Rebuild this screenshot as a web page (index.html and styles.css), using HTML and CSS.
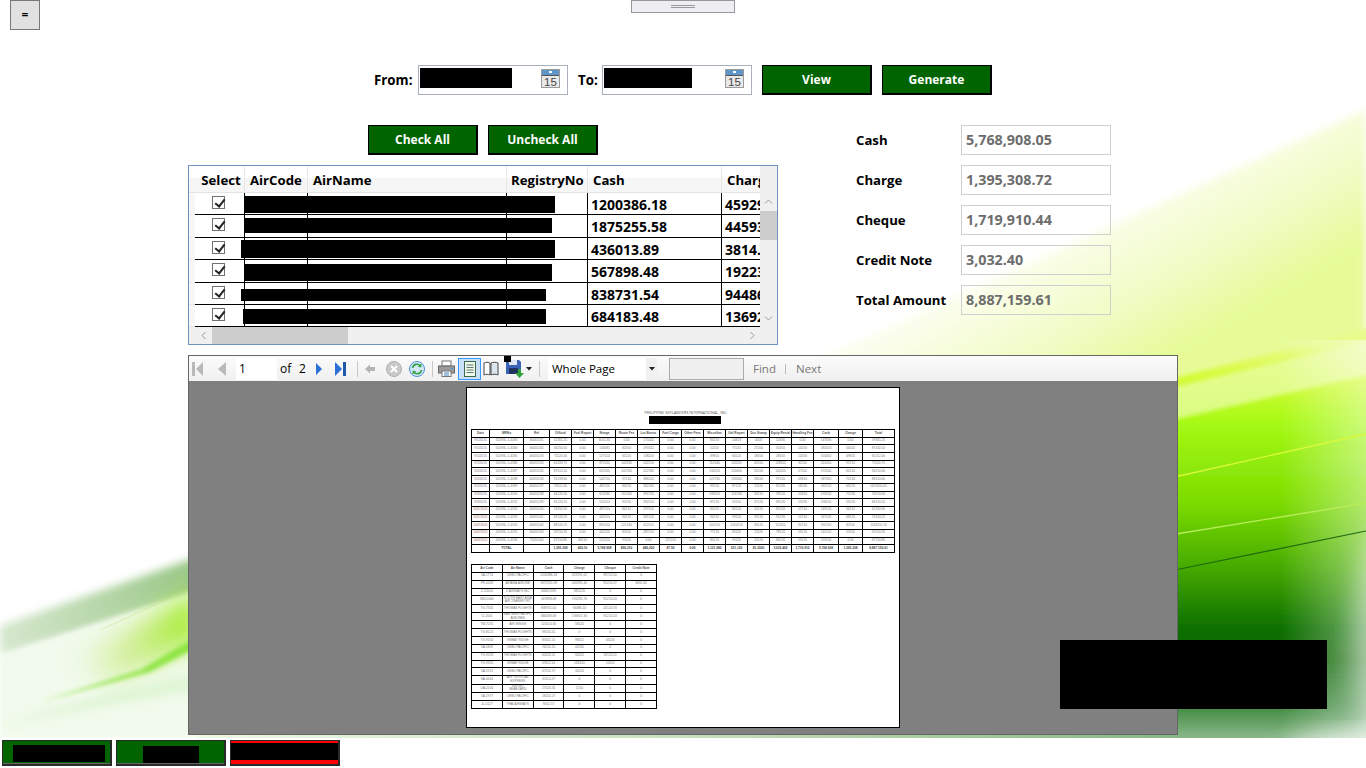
FILE: index.html
```html
<!DOCTYPE html>
<html lang="en">
<head>
<meta charset="utf-8">
<title>Collection Report</title>
<link rel="stylesheet" href="styles.css">
</head>
<body>
<header class="topbar">
  <div class="topbar-left"><button class="menu-btn">=</button></div>
  <div class="handle"><i></i></div>
  <div></div>
</header>
<main class="main">
  <svg class="backdrop" viewBox="0 30 1366 708" preserveAspectRatio="none" aria-hidden="true">
    <defs>
      <filter id="b2" x="-20%" y="-20%" width="140%" height="140%"><feGaussianBlur stdDeviation="2"/></filter>
      <filter id="b4" x="-20%" y="-20%" width="140%" height="140%"><feGaussianBlur stdDeviation="4"/></filter>
      <filter id="b12" x="-20%" y="-20%" width="140%" height="140%"><feGaussianBlur stdDeviation="12"/></filter>
      <linearGradient id="wash" gradientUnits="userSpaceOnUse" x1="1000" y1="200" x2="1110" y2="390">
        <stop offset="0" stop-color="#fff"/><stop offset=".3" stop-color="#fbfeec"/><stop offset=".7" stop-color="#f0fcc4"/><stop offset="1" stop-color="#e6fb98"/>
      </linearGradient>
      <linearGradient id="lime" gradientUnits="userSpaceOnUse" x1="0" y1="345" x2="0" y2="738">
        <stop offset="0" stop-color="#e8fb8c"/><stop offset=".08" stop-color="#d6fb38"/><stop offset=".2" stop-color="#a6f914"/>
        <stop offset=".4" stop-color="#7cdc00"/><stop offset=".56" stop-color="#48ac00"/><stop offset=".72" stop-color="#0e7000"/>
        <stop offset=".8" stop-color="#0a6400"/><stop offset=".92" stop-color="#3f8a3f"/><stop offset="1" stop-color="#8ab88a"/>
      </linearGradient>
      <linearGradient id="fade" x1="0" y1="0" x2="1" y2="0">
        <stop offset="0" stop-color="#fff" stop-opacity="0"/><stop offset="1" stop-color="#fff" stop-opacity=".42"/>
      </linearGradient>
      <linearGradient id="strip" x1="0" y1="0" x2="1" y2="0">
        <stop offset="0" stop-color="#eef8e4"/><stop offset=".5" stop-color="#c8e0bc"/><stop offset="1" stop-color="#86b686"/>
      </linearGradient>
      <linearGradient id="leftglow" gradientUnits="userSpaceOnUse" x1="70" y1="640" x2="190" y2="610">
        <stop offset="0" stop-color="#eef9e6"/><stop offset=".5" stop-color="#cfee90"/><stop offset="1" stop-color="#a4ec2c"/>
      </linearGradient>
      <linearGradient id="shade" gradientUnits="userSpaceOnUse" x1="0" y1="640" x2="190" y2="580">
        <stop offset="0" stop-color="#d6e8ce"/><stop offset="1" stop-color="#9cc88a"/>
      </linearGradient>
    </defs>
    <rect x="0" y="30" width="1366" height="708" fill="#fff"/>
    <polygon points="640,440 1366,110 1366,738 640,738" fill="url(#wash)" filter="url(#b4)"/>
    <polygon points="1120,392 1380,325 1380,750 1120,750" fill="url(#lime)" filter="url(#b2)"/>
    <polygon points="1120,400 1380,338 1380,372 1120,432" fill="#e9fda8" opacity=".75" filter="url(#b2)"/>
    <rect x="1280" y="340" width="86" height="398" fill="url(#fade)"/>
    <ellipse cx="1400" cy="640" rx="46" ry="130" fill="#fff" opacity=".4" filter="url(#b12)"/>
    <ellipse cx="1370" cy="760" rx="90" ry="28" fill="#fff" opacity=".7" filter="url(#b12)"/>
    <line x1="1170" y1="478" x2="1366" y2="434" stroke="#d9f83c" stroke-width="1.4"/>
    <line x1="1170" y1="535" x2="1366" y2="503" stroke="#b8ec58" stroke-width="1.4"/>
    <line x1="1170" y1="571" x2="1366" y2="531" stroke="#1f6a10" stroke-width="1.2"/>
    <rect x="195" y="734" width="985" height="4" fill="url(#strip)"/>

    <polygon points="0,626 200,556 200,592 0,656" fill="url(#shade)" filter="url(#b4)"/>
    <polygon points="0,656 200,590 200,738 0,738" fill="#f1faec" filter="url(#b2)"/>
    <polygon points="70,660 200,590 200,640 110,685" fill="url(#leftglow)" filter="url(#b12)"/>
    <polygon points="40,702 140,670 200,634 200,646 150,672" fill="#7fe22c" opacity=".8" filter="url(#b2)"/>
    <polygon points="0,725 120,690 200,672 200,690 110,705" fill="#dcf5d0" opacity=".8" filter="url(#b4)"/>
    <line x1="100" y1="630" x2="188" y2="590" stroke="#c4de80" stroke-width="1" opacity=".5"/>
  </svg>

  <section class="filters">
    <label class="date-label">From:</label>
    <div class="date-box">
      <span class="ink ink-from"></span>
      <svg class="cal" viewBox="0 0 19 19"><rect x=".5" y=".5" width="18" height="18" fill="#e9e9e9" stroke="#9a9a9a"/><rect x="1" y="1" width="17" height="5" fill="#5f95c8"/><rect x="1" y="6" width="17" height="1" fill="#555"/><rect x="8" y="2" width="3" height="2" fill="#fff"/><text x="9.5" y="16.500" text-anchor="middle" class="cal-text">15</text></svg>
    </div>
    <label class="date-label label-to">To:</label>
    <div class="date-box">
      <span class="ink ink-to"></span>
      <svg class="cal" viewBox="0 0 19 19"><rect x=".5" y=".5" width="18" height="18" fill="#e9e9e9" stroke="#9a9a9a"/><rect x="1" y="1" width="17" height="5" fill="#5f95c8"/><rect x="1" y="6" width="17" height="1" fill="#555"/><rect x="8" y="2" width="3" height="2" fill="#fff"/><text x="9.5" y="16.500" text-anchor="middle" class="cal-text">15</text></svg>
    </div>
    <button class="green-btn btn-view">View</button>
    <button class="green-btn">Generate</button>
  </section>

  <section class="middle">
    <div class="left-col">
      <div class="check-row">
        <button class="green-btn">Check All</button>
        <button class="green-btn">Uncheck All</button>
      </div>
      <div class="grid">
        <div class="grid-view">
          <div class="row head">
            <span class="c0"></span><span class="c1">Select</span><span class="c2">AirCode</span><span class="c3">AirName</span><span class="c4">RegistryNo</span><span class="c5">Cash</span><span class="c6">Charge</span>
          </div>
          <div class="row"><span class="c0"></span><span class="c1"><i class="tick"></i></span><span class="c2"></span><span class="c3"></span><span class="c4"></span><span class="c5">1200386.18</span><span class="c6">459291.02</span><span class="ink rr r1"></span></div>
          <div class="row"><span class="c0"></span><span class="c1"><i class="tick"></i></span><span class="c2"></span><span class="c3"></span><span class="c4"></span><span class="c5">1875255.58</span><span class="c6">445931.40</span><span class="ink rr r2"></span></div>
          <div class="row"><span class="c0"></span><span class="c1"><i class="tick"></i></span><span class="c2"></span><span class="c3"></span><span class="c4"></span><span class="c5">436013.89</span><span class="c6">3814.20</span><span class="ink rr r3"></span></div>
          <div class="row"><span class="c0"></span><span class="c1"><i class="tick"></i></span><span class="c2"></span><span class="c3"></span><span class="c4"></span><span class="c5">567898.48</span><span class="c6">192235.70</span><span class="ink rr r4"></span></div>
          <div class="row"><span class="c0"></span><span class="c1"><i class="tick"></i></span><span class="c2"></span><span class="c3"></span><span class="c4"></span><span class="c5">838731.54</span><span class="c6">94486.10</span><span class="ink rr r5"></span></div>
          <div class="row"><span class="c0"></span><span class="c1"><i class="tick"></i></span><span class="c2"></span><span class="c3"></span><span class="c4"></span><span class="c5">684183.48</span><span class="c6">136921.30</span><span class="ink rr r6"></span></div>
        </div>
        <div class="vscroll">
          <svg class="chev" viewBox="0 0 9 5"><path d="M1 4.5 4.5 1 8 4.5" fill="none" stroke="#9a9a9a"/></svg>
          <i class="vthumb"></i>
          <svg class="chev chev-down" viewBox="0 0 9 5"><path d="M1 .5 4.5 4 8 .5" fill="none" stroke="#9a9a9a"/></svg>
        </div>
        <div class="hscroll">
          <svg class="chev-h" viewBox="0 0 5 9"><path d="M4.5 1 1 4.5 4.5 8" fill="none" stroke="#9a9a9a"/></svg>
          <i class="hthumb"></i>
          <svg class="chev-h chev-right" viewBox="0 0 5 9"><path d="M.5 1 4 4.5 .5 8" fill="none" stroke="#9a9a9a"/></svg>
        </div>
      </div>
    </div>
    <div class="totals">
      <label>Cash</label><output>5,768,908.05</output>
      <label>Charge</label><output>1,395,308.72</output>
      <label>Cheque</label><output>1,719,910.44</output>
      <label>Credit Note</label><output>3,032.40</output>
      <label>Total Amount</label><output>8,887,159.61</output>
    </div>
  </section>

  <section class="viewer">
    <div class="toolbar">
      <svg class="ti t-first" viewBox="0 0 12 16"><rect x="0" y="1" width="3" height="14" fill="#b9b9b9"/><path d="M11 1v14L4 8z" fill="#b9b9b9"/></svg>
      <svg class="ti t-prev" viewBox="0 0 9 16"><path d="M9 1v14L1 8z" fill="#b9b9b9"/></svg>
      <span class="page-input">1</span>
      <span class="t-of">of</span>
      <span class="t-total">2</span>
      <svg class="ti t-next" viewBox="0 0 7 14"><path d="M0 0v14l7-7z" fill="#2a70d8"/></svg>
      <svg class="ti t-last" viewBox="0 0 12 14"><path d="M0 0v14l7-7z" fill="#2a70d8"/><rect x="8" y="0" width="3" height="14" fill="#2458a8"/></svg>
      <i class="sep s1"></i>
      <svg class="ti t-back" viewBox="0 0 10 10"><path d="M0 5 5 .5V3h5v4H5v2.500z" fill="#b5b5b5"/></svg>
      <svg class="ti t-stop" viewBox="0 0 16 16"><circle cx="8" cy="8" r="7.500" fill="#c9c9c9" stroke="#b0b0b0"/><path d="m5 5 6 6M11 5l-6 6" stroke="#fff" stroke-width="2"/></svg>
      <svg class="ti t-refresh" viewBox="0 0 16 16"><circle cx="8" cy="8" r="7.500" fill="#d6e9f8" stroke="#4c8fd0"/><path d="M3.500 7a4.500 4.500 0 0 1 8-2" fill="none" stroke="#35a04a" stroke-width="1.600"/><path d="m12.500 2.500-.2 4-3.600-1z" fill="#35a04a"/><path d="M12.500 9a4.500 4.500 0 0 1-8 2" fill="none" stroke="#35a04a" stroke-width="1.600"/><path d="m3.500 13.500.2-4 3.600 1z" fill="#35a04a"/></svg>
      <i class="sep s2"></i>
      <svg class="ti t-print" viewBox="0 0 17 17"><rect x="4" y="1" width="9" height="5" fill="#fff" stroke="#777"/><rect x=".5" y="6" width="16" height="7" fill="#9a9a9a" stroke="#666"/><rect x="4" y="11" width="9" height="5.500" fill="#fff" stroke="#777"/><rect x="13" y="8" width="2" height="1" fill="#3c9bf0"/><path d="M6 13h5M6 15h5" stroke="#3d7cc0"/></svg>
      <span class="toggle"><svg viewBox="0 0 12 16"><rect x=".5" y=".5" width="11" height="15" fill="#f0f8ea" stroke="#3b6a50"/><path d="M2.500 4h7M2.500 6.500h7M2.500 9h7M2.500 11.500h7" stroke="#5d7a78"/></svg></span>
      <svg class="ti t-book" viewBox="0 0 16 15"><path d="M1 2c2-1 4-1 6 0v12c-2-1-4-1-6 0z" fill="#fff" stroke="#444"/><path d="M8 2c2-1 5-1 7 0v12c-2-1-5-1-7 0z" fill="#dce6ee" stroke="#444"/></svg>
      <span class="save-wrap">
        <span class="ink ink-save"></span>
        <svg class="ti t-save" viewBox="0 0 19 20"><path d="M0 1h13l2 2v12H0z" fill="#3a63b8"/><rect x="3" y="1" width="8" height="5" fill="#dfe7f5"/><rect x="3" y="9" width="9" height="6" fill="#20325e"/><path d="M12 10h3v4h3l-4.500 5L9 14h3z" fill="#2fa33c"/></svg>
      </span>
      <svg class="ti t-drop" viewBox="0 0 6 4"><path d="M0 0h6L3 3.500z" fill="#222"/></svg>
      <i class="sep s3"></i>
      <span class="combo">Whole Page<span class="combo-arrow"><svg viewBox="0 0 6 4"><path d="M0 0h6L3 3.500z" fill="#222"/></svg></span></span>
      <span class="find-box"></span>
      <span class="t-find">Find</span>
      <i class="pipe"></i>
      <span class="t-next-word">Next</span>
    </div>
    <div class="canvas">
      <article class="page">
        <p class="page-title">PHILIPPINE SKYLANDERS INTERNATIONAL, INC.</p>
        <span class="ink ink-title"></span>
        <table class="sheet sheet-a">
          <colgroup><col class="w18"><col class="w34"><col class="w26"><col class="w22"><col class="w22"><col class="w22"><col class="w22"><col class="w22"><col class="w22"><col class="w22"><col class="w22"><col class="w22"><col class="w22"><col class="w22"><col class="w22"><col class="w25"><col class="w24"><col class="w32"></colgroup>
          <tr class="th"><td>Date<td>MRNo<td>Ref<td>Official<td>Fuel Report<td>Nringe<td>Route Fee<td>Lot Bonus<td>Fuel Cargo<td>Other Fees<td>Miscellan<td>Gal Report<td>Doc Stamp<td>Equip Rental<td>Handling Fee<td>Cash<td>Charge<td>Total
          <tr><td class="pk">9/1/2015<td>50193L-1-4183<td>40055131<td>52301.25<td>0.00<td>6011.35<td>0.00<td>171022<td>0.00<td>0.00<td>84150<td>14823<td>4500<td>12430<td>0.00<td>147030<td>0.00<td>59301.25
          <tr><td class="pk">9/1/2015<td>50193L-1-4184<td>40055132<td>34250.10<td>0.00<td>134081<td>82310<td>197412<td>0.00<td>0.00<td>52110<td>77241<td>27200<td>31450<td>14210<td>182013<td>56102<td>87432.10
          <tr><td class="pk">9/1/2015<td>50193L-1-4185<td>40055133<td>71120.40<td>0.00<td>127114<td>61520<td>138220<td>0.00<td>0.00<td>39810<td>64120<td>18300<td>28410<td>12030<td>153410<td>49820<td>65212.40
          <tr><td class="pk">9/1/2015<td>50193L-1-4186<td>40055134<td>61433.75<td>0.00<td>871550<td>102130<td>542110<td>0.00<td>0.00<td>112040<td>103225<td>42100<td>128410<td>32110<td>201410<td>97210<td>71120.75
          <tr><td class="pk">9/2/2015<td>50193L-1-4187<td>40055135<td>87412.10<td>0.00<td>611920<td>101700<td>412780<td>0.00<td>0.00<td>130210<td>120450<td>31200<td>104520<td>27110<td>172100<td>61210<td>94210.30
          <tr><td class="pk">9/2/2015<td>50193L-1-4188<td>40055136<td>91233.60<td>0.00<td>542710<td>97120<td>386120<td>0.00<td>0.00<td>121730<td>133200<td>28410<td>97120<td>29810<td>187310<td>72130<td>88120.60
          <tr><td class="pk">9/2/2015<td>50193L-1-4189<td>40055137<td>76112.45<td>0.00<td>487120<td>84250<td>302140<td>0.00<td>0.00<td>99210<td>87120<td>21120<td>81230<td>18240<td>162110<td>64120<td>1023410.45
          <tr><td class="pk">9/3/2015<td>50193L-1-4190<td>40055138<td>64120.30<td>0.00<td>612030<td>110240<td>391720<td>0.00<td>0.00<td>108120<td>114230<td>34210<td>99120<td>22410<td>174120<td>71230<td>76210.30
          <tr><td class="pk">9/3/2015<td>50193L-1-4191<td>40055139<td>81220.15<td>0.00<td>521410<td>91320<td>332110<td>0.00<td>0.00<td>87120<td>92110<td>27120<td>89120<td>19230<td>158210<td>59120<td>68120.15
          <tr><td class="rd">10/1/2015<td>50193L-1-4192<td>40055140<td>74310.90<td>0.00<td>487210<td>86210<td>297110<td>0.00<td>0.00<td>81020<td>84120<td>24120<td>82120<td>17210<td>149120<td>56210<td>62310.90
          <tr><td class="rd">10/1/2015<td>50193L-1-4193<td>40055141<td>69120.25<td>0.00<td>562110<td>94120<td>341120<td>0.00<td>0.00<td>94210<td>99120<td>29120<td>91230<td>21210<td>167120<td>68120<td>74120.25
          <tr><td class="rd">10/2/2015<td>50193L-1-4194<td>40055142<td>88120.70<td>0.00<td>691210<td>121130<td>412110<td>0.00<td>0.00<td>102110<td>1210210<td>36120<td>112110<td>31210<td>192110<td>82110<td>1143210.70
          <tr><td class="rd">10/2/2015<td>50193L-1-4195<td>40055143<td>59210.35<td>0.00<td>441120<td>82110<td>287210<td>0.00<td>0.00<td>77120<td>81120<td>21120<td>78120<td>16120<td>142110<td>52110<td>59210.35
          <tr><td class="rd">10/3/2015<td>50193L-1-4196<td>71055144<td>67210.85<td>40210<td>512110<td>91120<td>0.00<td>121210<td>0.00<td>84120<td>91120<td>24120<td>84120<td>19120<td>153120<td>0.00<td>67210.85
          <tr class="tot"><td><td>TOTAL<td><td>1,395,308<td>405.10<td>5,768,908<td>856,210<td>486,200<td>87.50<td>0.00<td>1,121,980<td>521,120<td>81,2000<td>3,032,400<td>1,719,910<td>5,768,908<td>1,395,308<td>8,887,159.61
        </table>
        <table class="sheet sheet-b">
          <tr class="th"><td>Air Code<td>Air Name<td>Cash<td>Charge<td>Cheque<td>Credit Note
          <tr><td>5A-1774<td>CEBU PACIFIC<td>1200386.18<td>459291.02<td>89721.50<td>0
          <tr><td>PR-0118<td>ASIANA AIRLINE<td>1875255.58<td>445931.40<td>81210.37<td>3032.40
          <tr><td>Z-22014<td>Z AIRWAYS INC<td>436013.89<td>3814.20<td>0<td>0
          <tr><td>MN-5040<td>SOUTH EAST ASIA AIR TRANSPORT<td>567898.48<td>192235.70<td>81210.24<td>0
          <tr><td>TG-7331<td>THOMAS FLIGHTS<td>838731.54<td>94486.10<td>42120.74<td>0
          <tr><td>CI-2041<td>EASTERN PACIFIC AIRLINES<td>684183.48<td>136921.30<td>81210.24<td>0
          <tr><td>TW-7231<td>AIR WINGS<td>121014.36<td>58120<td>0<td>0
          <tr><td>TG-8121<td>THOMAS FLIGHTS<td>99214.41<td>0<td>0<td>0
          <tr><td>TG-9102<td>GREAT RIDGE<td>87421.51<td>98412<td>34120<td>0
          <tr><td>5A-1809<td>CEBU PACIFIC<td>76210.10<td>41230<td>0<td>0
          <tr><td>TG-9233<td>THOMAS FLIGHTS<td>64120.21<td>56120<td>32120.12<td>0
          <tr><td>TG-9310<td>GREAT RIDGE<td>59112.14<td>128410<td>12410<td>0
          <tr><td>5A-1912<td>CEBU PACIFIC<td>47210.17<td>34120<td>0<td>0
          <tr><td>SA-0014<td>AIR TROPICAL EXPRESS<td>32110.27<td>0<td>0<td>0
          <tr><td>UA-2201<td>UNITED SEABOARD<td>27120.31<td>1210<td>0<td>0
          <tr><td>5A-1977<td>CEBU PACIFIC<td>18210.27<td>0<td>0<td>0
          <tr><td>JL-0127<td>THAI AIRWAYS<td>9012.57<td>0<td>0<td>0
        </table>
      </article>
    </div>
  </section>
  <span class="ink ink-stamp"></span>
</main>
<footer class="footer">
  <button class="task task-a"><span class="ink ink-a"></span></button>
  <button class="task task-b"><span class="ink ink-b"></span></button>
  <button class="task task-c"></button>
</footer>
</body>
</html>
```

FILE: styles.css
```css
* { box-sizing: border-box; }
html, body { margin: 0; height: 768px; overflow: hidden; }
body { width: 1366px; background: #fff; font-family: "Open Sans", "Noto Sans", sans-serif; color: #000; display: flex; flex-direction: column; }
button { font-family: inherit; padding: 0; margin: 0; cursor: default; }
.ink { display: block; background: #000; }

.topbar { height: 30px; display: grid; grid-template-columns: 1fr 104px 1fr; align-items: start; background: #fff; flex: none; }
.topbar-left { padding-left: 10px; }
.menu-btn { width: 30px; height: 30px; background: #e1e1e1; border: 1px solid #777; font-size: 12px; font-weight: 600; line-height: 1; color: #000; }
.handle { height: 13px; background: #eeeef2; border: 1px solid #999; display: flex; align-items: center; justify-content: center; }
.handle i { display: block; width: 24px; height: 3px; border-top: 1px solid #999; border-bottom: 1px solid #999; }

.main { position: relative; height: 708px; flex: none; border-top: 1px solid #e5e5e5; border-bottom: 1px solid #ddd; border-left: 1px solid #e5e5e5; border-right: 1px solid #e5e5e5; }
.backdrop { position: absolute; left: -1px; top: -1px; width: 1366px; height: 708px; z-index: 0; }
.filters, .middle, .viewer { position: relative; z-index: 1; }

.filters { display: flex; align-items: center; height: 30px; margin-top: 34px; padding-left: 373px; }
.date-label { font-size: 13.300px; font-weight: 700; line-height: 30px; width: 44px; }
.label-to { width: 24px; margin-left: 10px; }
.date-box { width: 150px; height: 30px; background: #fff; border: 1px solid #a9b0bc; display: flex; justify-content: space-between; padding: 2px 7px 0 1px; }
.ink-from { width: 92px; height: 20px; }
.ink-to { width: 88px; height: 20px; }
.cal { width: 19px; height: 19px; margin-top: 1px; }
.cal-text { font-size: 11.500px; fill: #444; font-family: "Liberation Sans", sans-serif; }
.green-btn { width: 110px; height: 30px; background: #006400; color: #fff; font-size: 12px; font-weight: 700; border: solid #000; border-width: 1px 2px 2px 1px; }
.btn-view { margin: 0 10px 0 10px; }

.middle { display: flex; margin-top: 30px; padding-left: 187px; }
.left-col { width: 590px; }
.check-row { display: flex; gap: 10px; padding-left: 180px; margin-bottom: 10px; }

.grid { width: 590px; height: 180px; border: 1px solid #6d93bf; background: #fff; display: grid; grid-template-columns: 571px 17px; grid-template-rows: 161px 17px; overflow: hidden; }
.grid-view { overflow: hidden; background: #fff; }
.row { position: relative; display: flex; height: 22.400px; font-size: 14px; font-weight: 700; line-height: 24px; }
.row > span { display: block; flex: none; white-space: nowrap; overflow: hidden; height: 100%; border-right: 1px solid #000; border-bottom: 1px solid #000; }
.row > .c0 { border-right: 0; border-bottom: 1px solid #e6e6e6; background: #f7f7f7; }
.c0 { width: 6px; }
.c1 { width: 50px; text-align: center; }
.c2 { width: 63px; }
.c3 { width: 199px; }
.c4 { width: 81px; }
.c5 { width: 134px; padding-left: 3px; }
.row > .c6 { width: 38px; padding-left: 3px; border-right: 0; }
.row.head { height: 27px; font-size: 13.200px; background: linear-gradient(#fff 0 45%, #f6f6f6 45% 100%); }
.row.head > span { border-right: 1px solid #e6e6e6; border-bottom: 1px solid #e4e4e4; line-height: 28px; padding-left: 5px; background: none; }
.row.head > .c1 { padding-left: 3px; }
.row.head > .c4 { padding-left: 4px; }
.row.head > .c6 { padding-left: 5px; border-right: 0; }
.row.head > .c0 { border-right: 0; padding: 0; }
.tick { display: block; width: 13px; height: 13px; margin: 3px auto 0 17px; border: 1px solid #707070; background: #fff; position: relative; }
.tick::after { content: ""; position: absolute; left: 3.500px; top: 0; width: 4px; height: 8px; border: solid #222; border-width: 0 2px 2px 0; transform: rotate(38deg); }
.row > .rr { position: absolute; border: 0; }
.row > .r1 { left: 55px; top: 3px; width: 311px; height: 17px; }
.row > .r2 { left: 55px; top: 3px; width: 308px; height: 15px; }
.row > .r3 { left: 52px; top: 2px; width: 314px; height: 18px; }
.row > .r4 { left: 55px; top: 4px; width: 308px; height: 17px; }
.row > .r5 { left: 52px; top: 6px; width: 305px; height: 12px; }
.row > .r6 { left: 54px; top: 4px; width: 303px; height: 15px; }

.vscroll { position: relative; background: #f0f0f0; display: block; }
.chev { position: absolute; left: 4px; top: 33px; width: 9px; height: 5px; }
.chev-down { top: 150px; }
.vthumb { position: absolute; left: 0; top: 45px; width: 17px; height: 29px; background: #cdcdcd; }
.hscroll { position: relative; grid-column: 1 / 3; background: #f0f0f0; }
.chev-h { position: absolute; left: 12px; top: 4px; width: 5px; height: 9px; }
.chev-right { left: 561px; }
.hthumb { position: absolute; left: 23px; top: 0; width: 136px; height: 17px; background: #cdcdcd; }

.totals { display: grid; grid-template-columns: 105px 150px; grid-auto-rows: 30px; row-gap: 10px; margin-left: 78px; font-size: 13.200px; font-weight: 700; align-self: start; }
.totals label { line-height: 30px; }
.totals output { display: block; border: 1px solid #cfcfcf; padding-left: 4px; line-height: 28px; font-size: 14.300px; color: #6d6d6d; }

.viewer { width: 990px; height: 380px; margin: 10px 0 0 187px; border: 1px solid #666; display: flex; flex-direction: column; }
.toolbar { height: 25px; flex: none; display: flex; align-items: center; font-size: 12px; background: linear-gradient(#fbfbfb, #f0f0f0); }
.ti { display: block; flex: none; }
.t-first { width: 12px; height: 16px; margin-left: 3px; }
.t-prev { width: 9px; height: 16px; margin-left: 13px; }
.page-input { width: 41px; height: 22px; line-height: 22px; background: #fff; margin-left: 10px; padding-left: 3px; flex: none; }
.t-of { margin-left: 3px; width: 19px; flex: none; }
.t-total { width: 17px; flex: none; }
.t-next { width: 6px; height: 14px; }
.t-last { width: 12px; height: 14px; margin-left: 13px; }
.sep { display: block; width: 1px; height: 16px; background: #c8c8c8; flex: none; }
.s1 { margin-left: 10px; }
.t-back { width: 10px; height: 10px; margin-left: 7px; }
.t-stop { width: 16px; height: 16px; margin-left: 11px; }
.t-refresh { width: 16px; height: 16px; margin-left: 7px; }
.s2 { margin-left: 7px; }
.t-print { width: 17px; height: 17px; margin-left: 5px; }
.toggle { width: 23px; height: 22px; margin-left: 3px; border: 1px solid #3399ff; background: #c9e0f7; display: flex; align-items: center; justify-content: center; flex: none; }
.toggle svg { width: 12px; height: 16px; }
.t-book { width: 16px; height: 15px; margin-left: 2px; }
.save-wrap { position: relative; display: block; margin-left: 7px; width: 19px; height: 20px; flex: none; }
.t-save { width: 19px; height: 20px; }
.ink-save { position: absolute; left: -2px; top: -3px; width: 7px; height: 6px; z-index: 1; }
.t-drop { width: 6px; height: 4px; margin-left: 1px; }
.s3 { margin-left: 7px; }
.combo { position: relative; width: 109px; height: 22px; margin-left: 8px; padding-left: 4px; background: #fff; line-height: 22px; font-size: 11.500px; flex: none; }
.combo-arrow { position: absolute; right: 0; top: 0; width: 11px; height: 22px; background: #f0f0f0; display: flex; align-items: center; justify-content: center; }
.combo-arrow svg { width: 6px; height: 4px; }
.find-box { width: 75px; height: 22px; margin-left: 12px; border: 1px solid #aaa; background: #f0f0f0; flex: none; }
.t-find { margin-left: 9px; width: 32px; font-size: 11.500px; color: #777; flex: none; }
.pipe { display: block; width: 1px; height: 10px; background: #bbb; flex: none; }
.t-next-word { margin-left: 10px; font-size: 11.500px; color: #777; flex: none; }

.canvas { flex: 1; background: #808080; padding: 6px 0 0 277px; }
.page { width: 434px; height: 341px; background: #fff; border: 1px solid #000; padding: 0 0 0 4px; }
.page-title { margin: 22px 0 0 170px; width: 90px; height: 5px; font-size: 3.800px; line-height: 5px; color: #555; text-align: center; white-space: nowrap; }
.ink-title { width: 72px; height: 8px; margin: 1px 0 0 178px; }
.sheet { border-collapse: collapse; table-layout: fixed; font-family: "Liberation Sans", sans-serif; font-size: 3.200px; line-height: 3.600px; color: #777; text-align: center; }
.sheet td { border: 1px solid #000; padding: 0; overflow: hidden; white-space: nowrap; }
.sheet-a { width: 423px; height: 123px; margin-top: 5px; }
.sheet-a tr { height: 7.690px; }
.sheet-b { width: 186px; height: 145px; margin-top: 11px; table-layout: fixed; }
.sheet-b td { white-space: normal; }
.sheet-b tr { height: 7.600px; }
.th td { color: #555; font-weight: 700; }
.tot td { color: #444; font-weight: 700; }
.pk { color: #7a6a88; }
.rd { color: #a05a5a; }
.w18 { width: 18px; } .w22 { width: 22px; } .w24 { width: 24px; } .w25 { width: 25px; } .w26 { width: 26px; } .w32 { width: 32px; } .w34 { width: 34px; }

.ink-stamp { position: absolute; z-index: 2; left: 1059px; top: 609px; width: 267px; height: 69px; }

.footer { flex: 1; display: flex; gap: 4px; padding: 2px 0 0 2px; background: #fff; }
.task { position: relative; width: 110px; height: 26px; background: #006400; border: solid #2a2a2a; border-width: 1px 2px 2px 1px; box-shadow: inset 0 -1px 0 #666; }
.ink-a { position: absolute; left: 10px; top: 4px; width: 92px; height: 17px; }
.ink-b { position: absolute; left: 26px; top: 5px; width: 56px; height: 17px; }
.task-c { background: #000; }
.task-c::before { content: ""; position: absolute; left: 0; right: 0; top: 0; height: 2px; background: #f00; }
.task-c::after { content: ""; position: absolute; left: 0; right: 0; bottom: 0; height: 4px; background: #f00; }
```
